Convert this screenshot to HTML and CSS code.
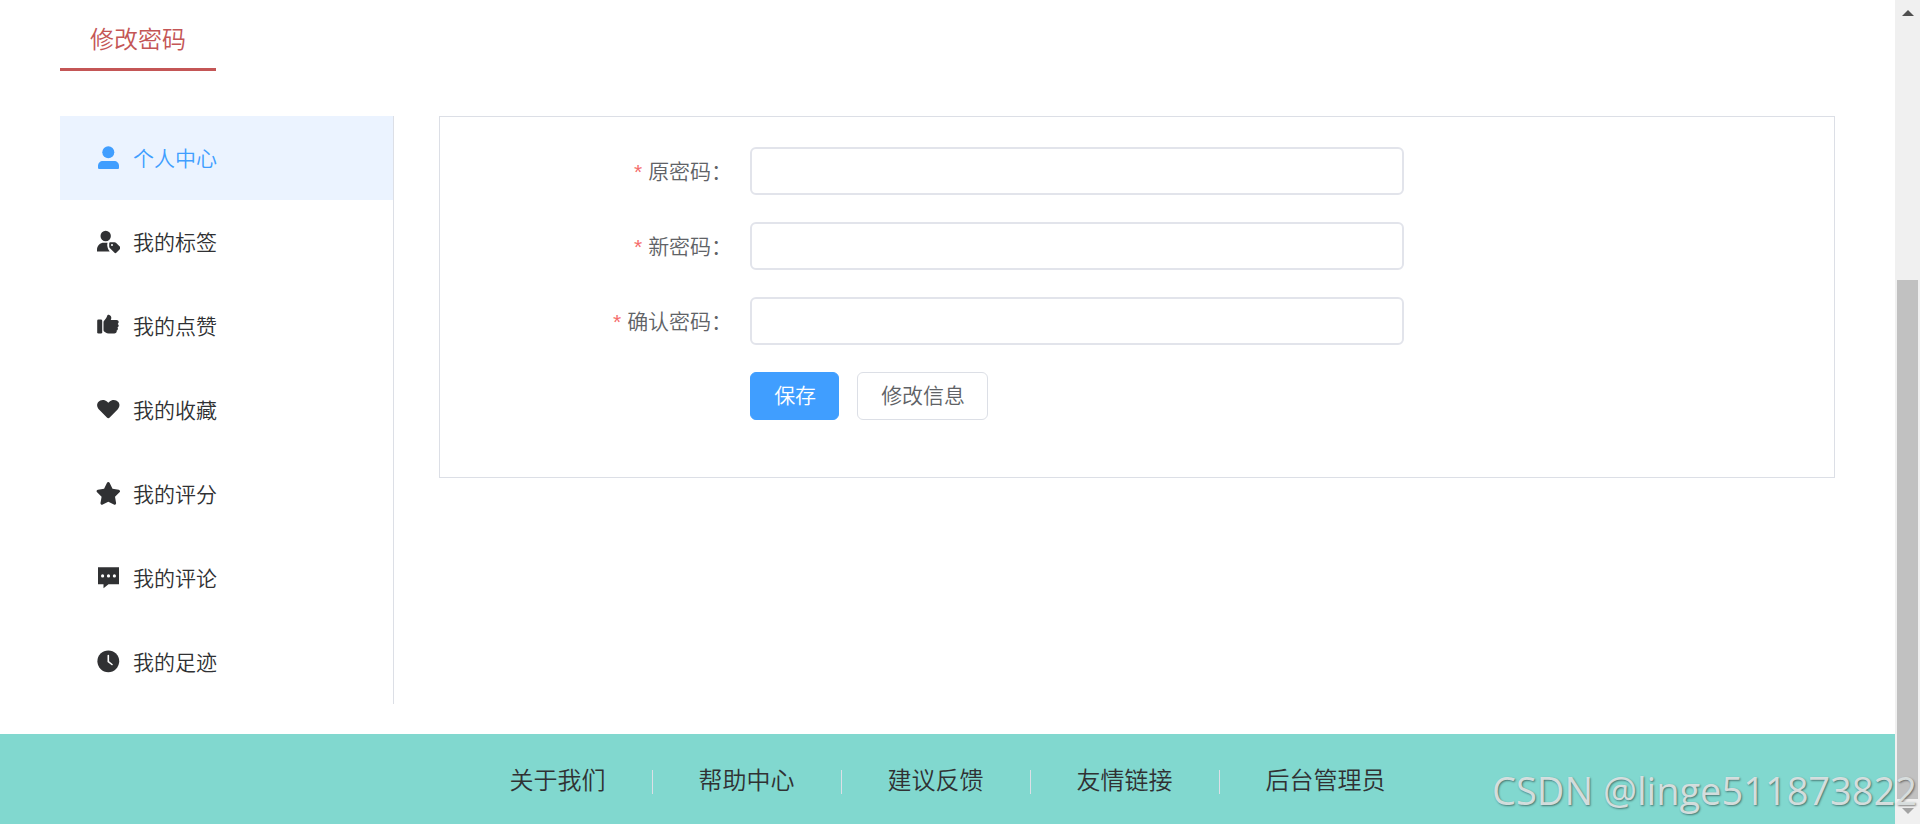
FILE: index.html
```html
<!DOCTYPE html>
<html lang="zh-CN">
<head>
    <meta charset="UTF-8">
    <meta name="viewport" content="width=device-width, initial-scale=1.0">
    <title>修改密码</title>
    <link rel="stylesheet" href="styles.css">
</head>
<body>

<div class="page">
    <main class="content">
        <h1 class="page-title">修改密码</h1>

        <div class="center">
            <!-- Side menu -->
            <nav class="menu">
                <a class="menu-item active" href="#">
                    <svg class="icon" viewBox="0 0 24 24"><circle cx="12.3" cy="6.3" r="6"/><path d="M2 21.5V20c0-3 2-5 5-5h11c3 0 5 2 5 5v1.5c0 1-.5 1.500-1.500 1.500h-18C2.500 23 2 22.500 2 21.500z"/></svg>
                    <span>个人中心</span>
                </a>
                <a class="menu-item" href="#">
                    <svg class="icon" viewBox="0 0 24 24"><circle cx="9.7" cy="6" r="5.200"/><path d="M1 21.500v-1.500c0-4.500 3-7.200 7-7.200h3.500c-.4 1.500-.4 3 0 4.200.3 1.500 1 2.700 2.200 4.500z"/><path fill-rule="evenodd" d="M13.200 13.500c0-.8.500-1.300 1.300-1.300h4c.7 0 1.200.2 1.700.7l3.800 3.800c.7.700.7 1.600 0 2.300l-3.500 3.600c-.7.700-1.500.7-2.200 0l-4.300-4.300c-.5-.5-.8-1-.8-1.700zM16 14a1 1 0 1 0 0 2 1 1 0 0 0 0-2z"/></svg>
                    <span>我的标签</span>
                </a>
                <a class="menu-item" href="#">
                    <svg class="icon" viewBox="0 0 24 24"><rect x="1.200" y="5.500" width="5" height="14" rx="1.300"/><path d="M7.500 8.500c0-1 .3-1.500 1-2.200 1.500-1.500 2.200-2.800 2.600-4.200C11.400.9 12.300.5 13.300.9c1.400.5 2.100 1.600 2 3-.1 1-.3 1.600-.6 2.200h5.800c1.300 0 2.200.9 2.200 2 0 .8-.4 1.400-1 1.800.7.400 1 1 1 1.700 0 .9-.6 1.600-1.200 1.800.4.400.5.900.4 1.500-.1.800-.7 1.400-1.300 1.600.2.500.2 1 0 1.600-.3.900-1.100 1.400-2.300 1.400h-5.700c-1.200 0-2.100-.3-3-.9l-1.100-.8c-.7-.5-1-1-1-1.900z"/></svg>
                    <span>我的点赞</span>
                </a>
                <a class="menu-item" href="#">
                    <svg class="icon" viewBox="0 0 24 24"><path d="M12.300 20.200c-.5 0-1-.2-1.400-.6L3.500 12C.6 9 .6 6 2.300 4 4.500 1.400 8.700 1.300 11.200 3.700l1.100 1.100 1.100-1.100c2.500-2.400 6.700-2.300 8.900.3 1.700 2 1.700 5-1.200 8l-7.400 7.600c-.4.400-.9.600-1.400.6z"/></svg>
                    <span>我的收藏</span>
                </a>
                <a class="menu-item" href="#">
                    <svg class="icon" viewBox="0 0 24 24"><path d="M10.900 1c.6-1.200 2.200-1.200 2.800 0l2.800 5.800 6.200.9c1.300.2 1.800 1.700.8 2.600L19 14.800l1.100 6.200c.2 1.300-1.100 2.200-2.200 1.600l-5.600-2.900-5.600 2.900c-1.100.6-2.400-.3-2.200-1.600l1.100-6.200-4.500-4.500c-1-.9-.5-2.400.8-2.600l6.200-.9z"/></svg>
                    <span>我的评分</span>
                </a>
                <a class="menu-item" href="#">
                    <svg class="icon" viewBox="0 0 24 24"><path fill-rule="evenodd" d="M2 1.200h21v17H12.500L7.500 22.300v-4.100H2zM6.600 8.300a1.600 1.600 0 1 0 0 3.200 1.600 1.600 0 0 0 0-3.200zm5.900 0a1.600 1.600 0 1 0 0 3.200 1.600 1.600 0 0 0 0-3.200zm5.900 0a1.600 1.600 0 1 0 0 3.200 1.600 1.600 0 0 0 0-3.200z"/></svg>
                    <span>我的评论</span>
                </a>
                <a class="menu-item" href="#">
                    <svg class="icon" viewBox="0 0 24 24"><circle cx="12.300" cy="11.300" r="10.900"/><path class="hands" d="M12.300 5.500v6l3.700 3"/></svg>
                    <span>我的足迹</span>
                </a>
            </nav>

            <!-- Password form -->
            <section class="panel">
                <form class="form">
                    <div class="form-item">
                        <label class="form-label" for="old-password">原密码：</label>
                        <input class="form-input" type="password" id="old-password">
                    </div>
                    <div class="form-item">
                        <label class="form-label" for="new-password">新密码：</label>
                        <input class="form-input" type="password" id="new-password">
                    </div>
                    <div class="form-item">
                        <label class="form-label" for="confirm-password">确认密码：</label>
                        <input class="form-input" type="password" id="confirm-password">
                    </div>
                    <div class="form-item">
                        <div class="form-buttons">
                            <button class="btn btn-primary" type="button">保存</button>
                            <button class="btn" type="button">修改信息</button>
                        </div>
                    </div>
                </form>
            </section>
        </div>
    </main>

    <footer class="footer">
        <a class="footer-link" href="#">关于我们</a>
        <a class="footer-link" href="#">帮助中心</a>
        <a class="footer-link" href="#">建议反馈</a>
        <a class="footer-link" href="#">友情链接</a>
        <a class="footer-link" href="#">后台管理员</a>
    </footer>
</div>

<div class="scrollbar">
    <svg class="arrow arrow-up" viewBox="0 0 12 6"><path d="M6 0l6 6H0z"/></svg>
    <div class="thumb"></div>
    <svg class="arrow arrow-down" viewBox="0 0 12 6"><path d="M0 0h12L6 6z"/></svg>
</div>

<div class="watermark">CSDN @linge511873822</div>

</body>
</html>
```
FILE: styles.css
```css
* {
    box-sizing: border-box;
}

body {
    display: flex;
    min-height: 100vh;
    margin: 0;
    background-color: #fff;
    color: #303133;
    font-family: "Noto Sans CJK SC", sans-serif;
    font-size: 21px;
    font-weight: 350;
}

a {
    color: inherit;
    text-decoration: none;
}

.page {
    display: flex;
    flex: 1;
    flex-direction: column;
}

.content {
    flex: 1;
    padding: 8px 60px 30px;
}

.page-title {
    width: fit-content;
    margin: 0 0 45px;
    padding: 0 30px;
    border-bottom: 3px solid #c45656;
    color: #c45656;
    font-size: 24px;
    font-weight: 350;
    line-height: 60px;
}

.center {
    display: flex;
    align-items: flex-start;
    gap: 45px;
}

/* Side menu */
.menu {
    flex: 0 0 334px;
    border-right: 1px solid #dcdfe6;
}

.menu-item {
    display: flex;
    align-items: center;
    gap: 13px;
    height: 84px;
    padding: 0 36px;
}

.menu-item span {
    padding-bottom: 2px;
}

.menu-item.active {
    background-color: #ebf3ff;
    color: #409eff;
}

.icon {
    width: 24px;
    height: 24px;
    fill: currentColor;
}

.hands {
    fill: none;
    stroke: #fff;
    stroke-width: 1.6;
    stroke-linecap: round;
}

/* Password form */
.panel {
    flex: 1;
    padding: 30px;
    border: 1px solid #dcdfe6;
}

.form {
    width: 70%;
}

.form-item {
    display: flex;
    margin-bottom: 27px;
}

.form-label {
    width: 30%;
    padding-right: 18px;
    color: #606266;
    line-height: 46px;
    text-align: right;
}

.form-label::before {
    content: "*";
    margin-right: 6px;
    color: #f56c6c;
    font-family: "Liberation Sans", sans-serif;
    line-height: 1;
}

.form-input {
    flex: 1;
    height: 48px;
    padding: 0 16px;
    border: 2px solid #e2e4eb;
    border-radius: 6px;
    font: inherit;
}

.form-buttons {
    display: flex;
    gap: 18px;
    margin-left: 30%;
}

.btn {
    height: 48px;
    padding: 0 22px 4px 23px;
    border: 1px solid #dcdfe6;
    border-radius: 6px;
    background-color: #fff;
    color: #606266;
    font: inherit;
    cursor: pointer;
}

.btn-primary {
    border-color: #409eff;
    background-color: #409eff;
    color: #fff;
}

/* Footer */
.footer {
    display: flex;
    align-items: center;
    justify-content: center;
    height: 90px;
    padding-bottom: 2px;
    background-color: #81d8cf;
    font-size: 24px;
}

.footer-link {
    display: flex;
    align-items: center;
}

.footer-link:not(:last-child)::after {
    content: "";
    width: 1px;
    height: 24px;
    margin: 8px 46px 0;
    background-color: #dcdfe6;
}

/* Scrollbar */
.scrollbar {
    display: flex;
    flex: 0 0 25px;
    flex-direction: column;
    align-items: center;
    justify-content: flex-end;
    gap: 9px;
    padding: 10px 0;
    background-color: #f0f0f0;
}

.arrow {
    width: 12px;
    height: 6px;
}

.arrow-up {
    margin-bottom: auto;
    fill: #505050;
}

.arrow-down {
    fill: #a3a3a3;
}

.thumb {
    width: 21px;
    height: 63vh;
    background-color: #c1c1c1;
}

.watermark {
    position: absolute;
    right: 3px;
    bottom: 14px;
    color: rgba(220, 226, 226, 0.95);
    font-family: "Open Sans", "Noto Sans", sans-serif;
    font-size: 38px;
    font-weight: 400;
    line-height: 40px;
    text-shadow: 1px 1px 2px rgba(0, 0, 0, 0.45);
}
```
